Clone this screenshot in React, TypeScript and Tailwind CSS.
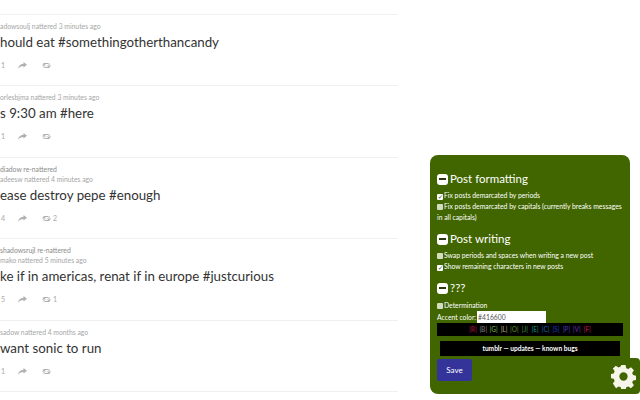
const sans = "font-['Lato','Open_Sans',sans-serif]";

const posts = [
  { by: ["adowsoulj nattered 3 minutes ago"], text: "hould eat #somethingotherthancandy", count: "1", renats: "", h: "h-[71px]" },
  { by: ["orlesbjma nattered 3 minutes ago"], text: "s 9:30 am #here", count: "1", renats: "", h: "h-[72px]" },
  { by: ["diadow re-nattered", "adeesw nattered 4 minutes ago"], text: "ease destroy pepe #enough", count: "4", renats: "2", h: "h-[81px]" },
  { by: ["shadowsrujl re-nattered", "mako nattered 5 minutes ago"], text: "ke if in americas, renat if in europe #justcurious", count: "5", renats: "1", h: "h-[82px]" },
  { by: ["sadow nattered 4 months ago"], text: "want sonic to run", count: "1", renats: "", h: "h-[71px]" },
];

const swatches = [
  ["R", "text-[#8a1030]"],
  ["B", "text-[#666666]"],
  ["G", "text-[#5a8a3a]"],
  ["L", "text-[#8a8a50]"],
  ["O", "text-[#4a6a20]"],
  ["J", "text-[#306a3a]"],
  ["E", "text-[#107060]"],
  ["C", "text-[#104a80]"],
  ["S", "text-[#1a2a90]"],
  ["P", "text-[#3a2a90]"],
  ["V", "text-[#50208a]"],
  ["F", "text-[#90103a]"],
];

function ReplyIcon() {
  return (
    <svg width="9" height="7" viewBox="0 0 9 7" fill="#b0b0b0">
      <path d="M5.500 0 9 2.800 5.500 5.600V4C3 4 1.400 4.800 0 7c.3-3 2-5 5.500-5.300z" />
    </svg>
  );
}

function RenatIcon() {
  return (
    <svg width="9" height="7" viewBox="0 0 9 7" fill="none" stroke="#b0b0b0" strokeWidth="1">
      <path d="M2 6V1.500H6M0.500 3.500 2 1.500 3.500 3.500M7 1V5.500H3M5.500 3.500 7 5.500 8.500 3.500" />
    </svg>
  );
}

function Post({ post }: { post: (typeof posts)[number] }) {
  return (
    <div className={`${post.h} border-b border-[#f0f0f0] w-[398px] overflow-hidden pt-[6px]`}>
      {post.by.map((line, i) => (
        <div key={line} className={`text-[6.800px] leading-[10px] whitespace-nowrap ${i === 0 && post.by.length > 1 ? "text-[#8a8a8a]" : "text-[#a6a6a6]"}`}>
          {line}
        </div>
      ))}
      <div className="text-[13.300px] leading-[18px] mt-[2px] text-[#333333] whitespace-nowrap">{post.text}</div>
      <div className="flex items-center h-[10px] mt-[9px] text-[7px] text-[#a8a8a8]">
        <span className="w-[18px] pl-[1px]">{post.count}</span>
        <span className="flex w-[24px]"><ReplyIcon /></span>
        <RenatIcon />
        {post.renats && <span className="ml-[2px]">{post.renats}</span>}
      </div>
    </div>
  );
}

function SectionTitle({ title }: { title: string }) {
  return (
    <div className="flex items-center gap-[2px] text-white text-[11.500px] leading-[14px]">
      <span className="flex items-center justify-center w-[11px] h-[11px] bg-white rounded-[3px]">
        <span className="w-[7px] h-[2px] bg-[#2c3a10]" />
      </span>
      {title}
    </div>
  );
}

function Check({ on, label }: { on: boolean; label: string }) {
  return (
    <div className="text-[6.800px] leading-[11px] text-white">
      <span className={`inline-flex items-center justify-center align-[-1px] w-[6px] h-[6px] mr-[1px] text-[6px] leading-none rounded-[1px] ${on ? "bg-white text-[#2c3a10]" : "bg-[#d4dcc0]"}`}>
        {on ? "✓" : ""}
      </span>
      {label}
    </div>
  );
}

export default function App() {
  return (
    <div className={`relative w-[640px] h-[400px] overflow-hidden bg-white ${sans}`}>
      <div className="border-b border-[#f0f0f0] h-[15px] w-[398px]" />
      {posts.map((p) => (
        <Post key={p.text} post={p} />
      ))}

      <div className="absolute left-[430px] top-[155px] w-[200px] h-[239px] bg-[#416600] rounded-[8px] px-[7px] pt-[17px]">
        <SectionTitle title="Post formatting" />
        <div className="mt-[4px]">
          <Check on label="Fix posts demarcated by periods" />
          <Check on={false} label="Fix posts demarcated by capitals (currently breaks messages in all capitals)" />
        </div>
        <div className="mt-[9px]">
          <SectionTitle title="Post writing" />
        </div>
        <div className="mt-[4px]">
          <Check on={false} label="Swap periods and spaces when writing a new post" />
          <Check on label="Show remaining characters in new posts" />
        </div>
        <div className="mt-[9px]">
          <SectionTitle title="???" />
        </div>
        <div className="mt-[5px]">
          <Check on={false} label="Determination" />
        </div>
        <div className="flex items-center text-[6.800px] leading-[11px] text-white">
          Accent color:
          <span className="ml-[1px] w-[69px] h-[12px] bg-white text-[#555555] pl-[1px] leading-[12px]">#416600</span>
        </div>
        <div className="flex justify-center items-center h-[13px] w-[186px] bg-black text-[6.500px] font-bold">
          {swatches.map(([l, c]) => (
            <span key={l} className={`${c} w-[10.400px] text-center`}>|{l}|</span>
          ))}
        </div>
        <div className="flex justify-center items-center h-[15px] w-[180px] ml-[3px] mt-[5px] bg-black text-white text-[6.600px] font-bold">
          tumblr — updates — known bugs
        </div>
        <div className="flex justify-center items-center mt-[3px] w-[35px] h-[22px] bg-[#33339a] text-white text-[8px] rounded-[2px]">
          Save
        </div>
      </div>

      <div className="absolute left-[606px] top-[358px] w-[34px] h-[36px] bg-[#416600] rounded-tl-[6px] rounded-r-[4px] flex items-center justify-center">
        <svg width="25" height="25" viewBox="0 0 24 24" fill="#f5f5ea" fillRule="evenodd">
          <path d="M10 1h4l.6 3 2 .9 2.600-1.700 2.800 2.800-1.700 2.600.9 2 3 .6v4l-3 .6-.9 2 1.700 2.600-2.800 2.800-2.600-1.700-2 .9-.6 3h-4l-.6-3-2-.9-2.600 1.700L1.800 18.800l1.700-2.600-.9-2-3-.6v-4l3-.6.9-2L1.800 4.400l2.800-2.800 2.600 1.700 2-.9zM12 8a4 4 0 1 0 0 8 4 4 0 0 0 0-8z" />
        </svg>
      </div>
    </div>
  );
}
